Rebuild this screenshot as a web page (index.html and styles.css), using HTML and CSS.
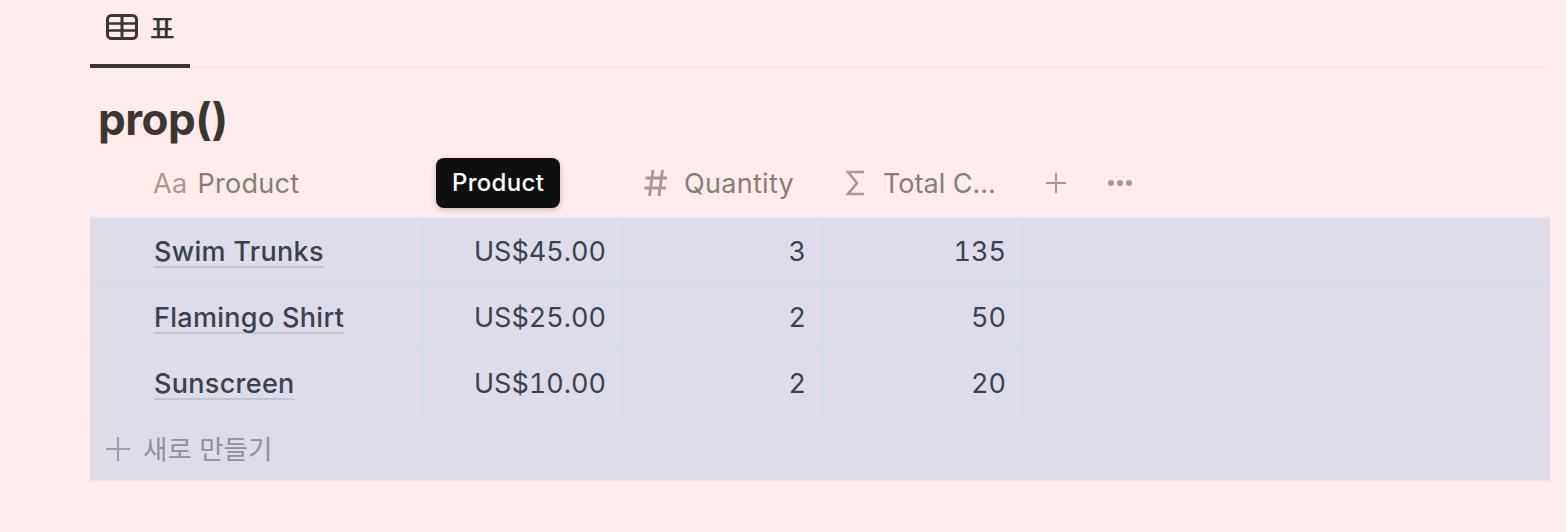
FILE: index.html
```html
<!DOCTYPE html>
<html lang="ko">
<head>
    <meta charset="UTF-8">
    <title>prop()</title>
    <link rel="stylesheet" href="styles.css">
</head>
<body>

<div class="page">
    <div class="tabs">
        <div class="tab">
            <svg class="tab-icon" width="32" height="26" viewBox="0 0 32 26" fill="none" stroke="#3a3732">
                <rect x="1.5" y="1.5" width="29" height="23" rx="4" stroke-width="3"/>
                <path d="M2 9.5H30M2 16.5H30" stroke-width="2.4"/>
                <path d="M16 2V24" stroke-width="3"/>
            </svg>
            <span>표</span>
        </div>
    </div>

    <h1 class="title">prop()</h1>

    <div class="head">
        <div class="head-cell name-col">
            <span class="type-aa">Aa</span>
            <span>Product</span>
        </div>
        <div class="head-cell price-col">
            <div class="tooltip">Product</div>
        </div>
        <div class="head-cell num-col">
            <svg class="type-icon" width="26" height="30" viewBox="0 0 26 30" fill="none" stroke="#a39a96" stroke-width="2.8">
                <path d="M10 2L6.5 28M19.5 2L16 28M2.5 10H24M1.5 20H23"/>
            </svg>
            <span>Quantity</span>
        </div>
        <div class="head-cell num-col">
            <svg class="type-icon sigma" width="22" height="28" viewBox="0 0 22 28" fill="none" stroke="#a39a96" stroke-width="2.6">
                <path d="M19 3H3L12 14L3 25H19"/>
            </svg>
            <span class="total-label">Total C…</span>
        </div>
        <div class="head-actions">
            <svg width="22" height="22" viewBox="0 0 22 22" stroke="#a39a96" stroke-width="2">
                <path d="M11 1V21M1 11H21"/>
            </svg>
            <svg width="26" height="8" viewBox="0 0 26 8" fill="#a39a96">
                <circle cx="4" cy="4" r="3"/>
                <circle cx="13" cy="4" r="3"/>
                <circle cx="22" cy="4" r="3"/>
            </svg>
        </div>
    </div>

    <div class="table">
        <div class="row">
            <div class="cell name-col"><span class="link">Swim Trunks</span></div>
            <div class="cell price-col">US$45.00</div>
            <div class="cell num-col">3</div>
            <div class="cell num-col">135</div>
        </div>
        <div class="row">
            <div class="cell name-col"><span class="link">Flamingo Shirt</span></div>
            <div class="cell price-col">US$25.00</div>
            <div class="cell num-col">2</div>
            <div class="cell num-col">50</div>
        </div>
        <div class="row">
            <div class="cell name-col"><span class="link">Sunscreen</span></div>
            <div class="cell price-col">US$10.00</div>
            <div class="cell num-col">2</div>
            <div class="cell num-col">20</div>
        </div>
        <div class="new-row">
            <svg width="26" height="26" viewBox="0 0 26 26" stroke="#9f9fac" stroke-width="2.2">
                <path d="M13 1V25M1 13H25"/>
            </svg>
            <span class="new-label">새로 만들기</span>
        </div>
    </div>
</div>

</body>
</html>
```

FILE: styles.css
```css
body {
    margin: 0;
    background-color: #feebeb;
    font-family: Inter, "Noto Sans CJK KR", sans-serif;
    color: #37352f;
}

.page {
    margin: 0 16px 0 90px;
}

.tabs {
    height: 66px;
    border-bottom: 2px solid #f0e9e8;
}

.tab {
    display: flex;
    align-items: center;
    gap: 12px;
    box-sizing: border-box;
    width: 100px;
    height: 68px;
    padding: 0 0 10px 16px;
    border-bottom: 4px solid #3a3732;
    font-size: 27px;
    font-weight: 500;
}

.title {
    margin: 0;
    padding: 25px 0 0 8px;
    height: 82px;
    box-sizing: border-box;
    font-size: 44px;
    line-height: 52px;
    font-weight: 700;
    letter-spacing: -0.5px;
    color: #3a3732;
}

.head {
    display: flex;
    height: 66px;
    font-size: 27px;
    letter-spacing: 0.3px;
    color: #857d7a;
}

.head-cell {
    position: relative;
    display: flex;
    align-items: center;
    box-sizing: border-box;
    width: 200px;
}

.head-cell.name-col {
    width: 333px;
    padding-left: 63px;
}

.name-col {
    width: 334px;
    padding-left: 64px;
}

.price-col {
    width: 200px;
}

.num-col {
    width: 200px;
}

.type-aa {
    margin-right: 10px;
    color: #a39a96;
}

.type-icon {
    margin: 0 15px 0 20px;
}

.sigma {
    margin: 0 16px 0 22px;
}

.total-label {
    white-space: nowrap;
    letter-spacing: 0;
}

.head-actions {
    display: flex;
    align-items: center;
    gap: 40px;
    padding-left: 22px;
}

.tooltip {
    position: absolute;
    left: 13px;
    top: 8px;
    padding: 0 16px;
    height: 50px;
    line-height: 50px;
    border-radius: 8px;
    background-color: #0f0f0f;
    color: #fff;
    font-size: 24px;
    font-weight: 500;
    box-shadow: 0 2px 6px rgba(0, 0, 0, 0.2);
}

.table {
    background-color: #dedce9;
    border-top: 2px solid #ebe8ee;
    border-bottom: 2px solid #ece8ea;
}

.row {
    display: flex;
    height: 66px;
    border-bottom: 2px solid #d0deea;
    box-sizing: border-box;
    font-size: 27px;
    font-variant-numeric: tabular-nums;
    color: #38434f;
}

.row:first-child {
    height: 68px;
}

.cell {
    display: flex;
    align-items: center;
    justify-content: flex-end;
    box-sizing: border-box;
    padding-right: 16px;
    border-right: 2px solid #d2dfea;
}

.row + .row .cell {
    padding-bottom: 2px;
}

.cell.name-col {
    justify-content: flex-start;
    padding-right: 0;
}

.link {
    font-weight: 500;
    letter-spacing: 0.3px;
    padding-top: 2px;
    border-bottom: 2px solid #c4c4d2;
    line-height: 29px;
}

.new-row {
    display: flex;
    align-items: center;
    gap: 12px;
    height: 62px;
    padding-left: 15px;
    font-size: 26.5px;
    color: #8f8f9d;
}

.new-label {
    margin-bottom: 4px;
}
```
